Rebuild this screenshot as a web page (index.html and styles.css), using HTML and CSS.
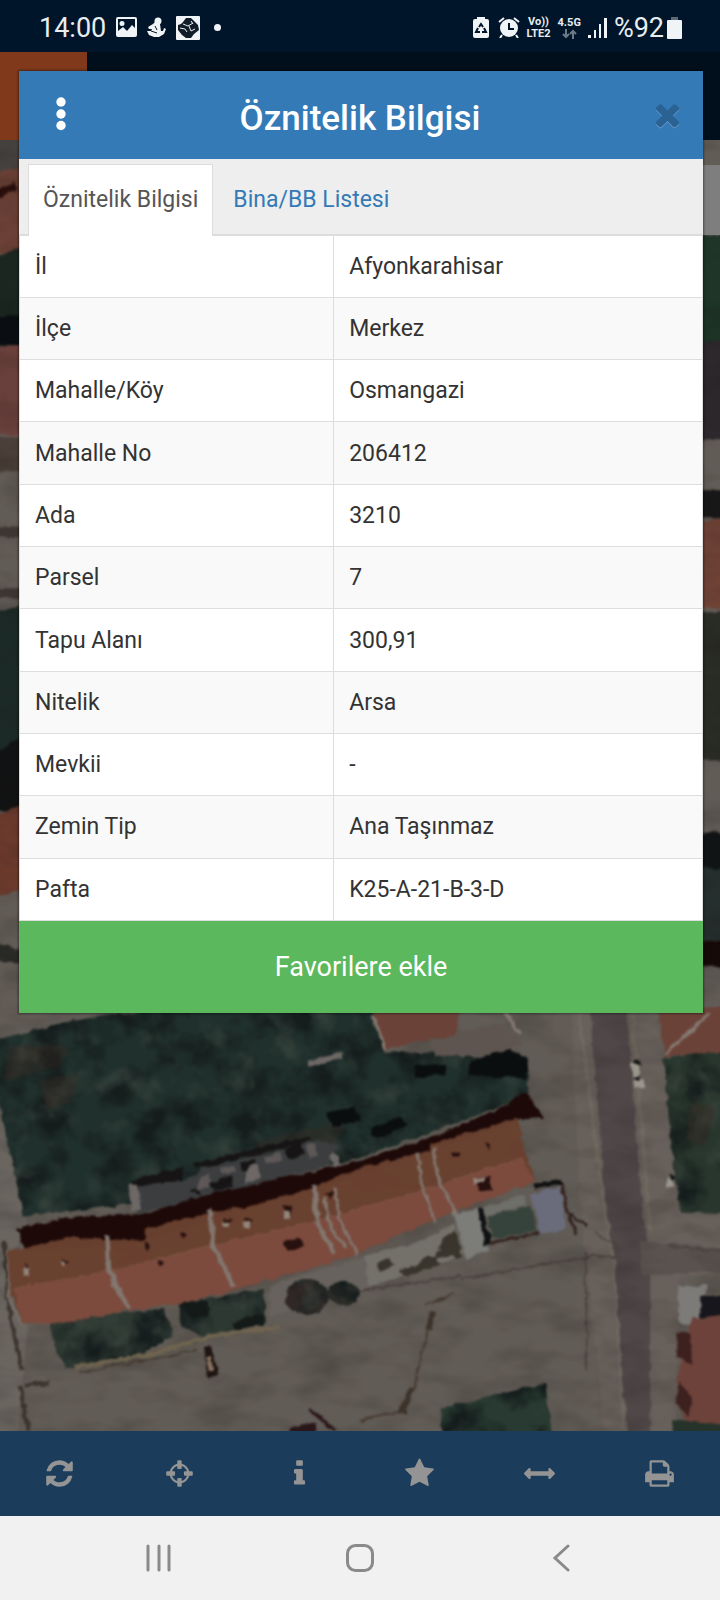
FILE: index.html
```html
<!DOCTYPE html>
<html lang="tr">
<head>
    <meta charset="UTF-8">
    <meta name="viewport" content="width=device-width, initial-scale=1.0">
    <title>Öznitelik Bilgisi</title>
    <link rel="stylesheet" href="styles.css">
</head>
<body>
    <div class="screen">
        <div class="status-bar">
            <div class="status-group">
                <span class="clock">14:00</span>
                <svg class="status-icon" width="21" height="21" viewBox="0 0 21 21">
                    <path fill-rule="evenodd" d="M2 0h17a2 2 0 0 1 2 2v16a2 2 0 0 1-2 2H2a2 2 0 0 1-2-2V2a2 2 0 0 1 2-2zM2 2v12l5-4 4 4 5-6 3 3V2zM6 4a2 2 0 1 1 0 5 2 2 0 0 1 0-5z"/>
                </svg>
                <svg class="status-icon" width="19" height="21" viewBox="0 0 19 21">
                    <circle cx="11" cy="4" r="3.500"/>
                    <path d="M8 5l5 2 1 7 2 0 1-3 2 1-2 5-5 3-5 0-5-2-2-4 4 0 1-2-3 0-1-2 5-3z"/>
                    <path d="M8 9l2 4M4 14l6 2" stroke="#001529" fill="none"/>
                </svg>
                <svg class="status-icon" width="24" height="24" viewBox="0 0 24 24">
                    <rect width="24" height="24" rx="1"/>
                    <path fill="#101c28" d="M7 6l3-4 5 0 4 4 3 3 1 5-5 4-3 4-5 0-4-3-4-5 0-5 3-1z"/>
                    <path stroke="#e8edf0" fill="none" d="M7 8l5 2 5-3M4 12l5 1 2 3M13 10l2 5 4-2M15 5l2 3"/>
                </svg>
                <span class="status-dot"></span>
            </div>
            <div class="status-group status-right">
                <svg class="status-icon" width="16" height="21" viewBox="0 0 16 21">
                    <path d="M4 0h8v2h2a2 2 0 0 1 2 2v15a2 2 0 0 1-2 2H2a2 2 0 0 1-2-2V4a2 2 0 0 1 2-2h2z"/>
                    <path stroke="#001529" stroke-width="2" fill="none" d="M6 10l2-3 2 3M5 11l-2 4h4M11 11l2 4h-4"/>
                </svg>
                <svg class="status-icon alarm" width="22" height="21" viewBox="0 0 22 21">
                    <circle cx="11" cy="11" r="9"/>
                    <path stroke="#f0f4f7" stroke-width="2" fill="none" d="M1 5l5-4M21 5l-5-4M4 18l-2 3M18 18l2 3"/>
                    <path stroke="#001529" stroke-width="2" fill="none" d="M11 6v6h5"/>
                </svg>
                <span class="net-label"><span>Vo))</span><span>LTE2</span></span>
                <span class="net-label"><span>4.5G</span>
                    <svg width="15" height="10" viewBox="0 0 15 10"><path stroke="#6c7a86" stroke-width="2" fill="none" d="M4 0v8M1 5l3 3 3-3M11 10V2M8 5l3-3 3 3"/></svg>
                </span>
                <svg class="status-icon" width="19" height="21" viewBox="0 0 19 21">
                    <path d="M0 18h3v3H0zM6 13h2v8H6zM11 7h2v14h-2zM16 1h3v20h-3z"/>
                </svg>
                <span class="battery">%92
                    <svg class="status-icon" width="15" height="22" viewBox="0 0 15 22"><path fill="#5d6972" d="M4 0h7v3H4z"/><rect y="3" width="15" height="19" rx="1"/></svg>
                </span>
            </div>
        </div>

        <div class="app-header"><div class="app-menu"></div></div>

        <div class="map">
            <svg class="map-image" viewBox="0 140 720 1290" preserveAspectRatio="xMidYMid slice">
                <defs>
                    <filter id="rough" x="0" y="0" width="100%" height="100%" color-interpolation-filters="sRGB">
                        <feTurbulence type="fractalNoise" baseFrequency="0.1" numOctaves="3" seed="4" result="n"/>
                        <feDisplacementMap in="SourceGraphic" in2="n" scale="6" xChannelSelector="R" yChannelSelector="G"/>
                        <feGaussianBlur stdDeviation="1.100"/>
                    </filter>
                    <filter id="leaves" x="0" y="0" width="100%" height="100%" color-interpolation-filters="sRGB">
                        <feTurbulence type="fractalNoise" baseFrequency="0.03" numOctaves="4" seed="11" result="n"/>
                        <feColorMatrix in="n" values="0 0 0 0 0.08  0 0 0 0 0.11  0 0 0 0 0.11  3 0 0 0 -1.300"/>
                        <feComposite in2="SourceAlpha" operator="in" result="dark"/>
                        <feColorMatrix in="n" values="0 0 0 0 0.26  0 0 0 0 0.3  0 0 0 0 0.27  0 2 0 0 -1.100"/>
                        <feComposite in2="SourceAlpha" operator="in" result="light"/>
                        <feMerge><feMergeNode in="SourceGraphic"/><feMergeNode in="dark"/><feMergeNode in="light"/></feMerge>
                    </filter>
                    <filter id="grain" x="0" y="0" width="100%" height="100%" color-interpolation-filters="sRGB">
                        <feTurbulence type="fractalNoise" baseFrequency="0.02 0.04" numOctaves="3" seed="7"/>
                        <feColorMatrix values="0 0 0 0 0.1  0 0 0 0 0.08  0 0 0 0 0.07  1.800 0 0 0 -0.750"/>
                    </filter>
                </defs>
                <rect y="140" width="720" height="1290" fill="#625c56"/>
                <g filter="url(#rough)">
                    <!-- left edge -->
                    <path fill="#45413e" d="M-9 130h40v50H-9z"/>
                    <path fill="#6b4036" d="M-9 175l40-12v90H-9z"/>
                    <path fill="#2a0d0b" d="M-9 192l25-10v8l-25 12z"/>
                    <path fill="#1b2721" d="M-9 258l40-14v104H-9z"/>
                    <path fill="#0a0e12" d="M-9 318l40-4v34l-40-6z"/>
                    <path fill="#6a403c" d="M-9 345h40v90H-9z"/>
                    <path fill="#4b4039" d="M-9 437h40v34H-9z"/>
                    <path fill="#3f3733" d="M-9 527h40v10H-9zM-9 588h40v10H-9z"/>
                    <path fill="#1c2a27" d="M-9 612l40-8v150H-9z"/>
                    <path fill="#111213" d="M-9 755l40-25v80H-9z"/>
                    <path fill="#6b3a2d" d="M-9 815l40-12v84l-40 12z"/>
                    <path fill="#292926" d="M-9 940l40 12v14l-40-8z"/>
                    <!-- right edge -->
                    <path fill="#1d3627" d="M690 234h40v114h-40z"/>
                    <path fill="#2c282c" d="M690 345l40-8v102h-40z"/>
                    <path fill="#161817" d="M690 490h40v28h-40z"/>
                    <path fill="#6f4236" d="M690 524l40-8v92h-40z"/>
                    <path fill="#2a2c26" d="M690 612h40v148h-40z"/>
                    <path fill="#111415" d="M690 832h40v38h-40z"/>
                    <path fill="#252f2e" d="M690 868h40v72h-40z"/>
                    <path fill="#150908" d="M690 940h40v26h-40z"/>
                    <!-- roads -->
                    <path fill="#68605a" d="M570 1000h95l20 215h45v60h-50l-5 160h-70l-25-230z"/>
                    <path fill="#504749" d="M590 1000h36l14 185 8 58 20 16-18 14 0 160h-22l-18-190-8-80z"/>
                    <path fill="#5a524f" d="M640 1240l90 8v22l-88 4z"/>
                    <path fill="none" stroke="#716861" stroke-width="3" d="M578 1010l26 190 10 70 10 160M632 1010l18 220"/>
                    <path fill="none" stroke="#4c4440" stroke-width="2" d="M460 1278l130-22 30 0M585 1250l2 120M596 1232l24 16M670 1246l50 4M360 1290l100-15"/>
                    <path fill="#6a655f" d="M-9 1110l14 0 22 115-14 30 15 70-10 110H-9z"/>
                    <path fill="none" stroke="#3c352f" stroke-width="4" d="M4 1240l6 70 12 60M21 1385l8 45M26 1384l24-3"/>
                    <path fill="none" stroke="#786e68" stroke-width="3" d="M8 1250l2 50 12 24"/>
                </g>
                <rect y="140" width="720" height="1290" filter="url(#grain)" opacity=".25"/>
                <g filter="url(#rough)">
                    <g filter="url(#leaves)">
                        <path fill="#20302c" d="M-9 1040l94-22 60-8 230 0 10 42 90-2 52 5 2 38-60 25-120 42-160 36-165 20-24-112z"/>
                        <path fill="#28362d" d="M663 1058l67-10v164h-50l-8-60z"/>
                        <path fill="#283a31" d="M440 1408l105-26 8 60H445z"/>
                        <path fill="#2d3832" d="M50 1322l70-10 45-4 8 26-40 24-66 10-12-22zM180 1302l84-14 2 34-62 14-24-12z"/>
                    </g>
                    <path fill="#3b2923" d="M10 1045h60l-10 20-55 15zM40 1080l40-8-8 30-25 5zM260 1140l90-22-20 34-90 14zM690 1100l24 6-8 40-20-6z" opacity=".35"/>
                    <path fill="#0b0e0f" d="M415 1065l32-2-2 10-30 4zM470 1060l40-12 18 8-2 22-58-4zM325 1112l30-6 6 14-28 6zM370 1128l30-12 8 8-32 14z"/>
                    <!-- back yards -->
                    <path fill="#3c3d3f" d="M127 1185l60-6 20-14 50-10 60-16 22 6-10 20-80 20-110 28z"/>
                    <path fill="#161414" d="M130 1180l54-14-2 14-46 6zM195 1163l115-28v5l-113 28zM210 1182l22-8 2 12-20 4zM240 1162l16-4-2 10-12 2zM284 1148l16-6 4 12-14 4zM190 1190l8-4 2 8z"/>
                    <path fill="#6d6866" d="M250 1164l8 0 2 14-16 4zM129 1183h9l3 26-10 2zM308 1060l34-8v6l-34 8zM335 1150l8 20-5 6-8-20z"/>
                    <path fill="#5d5857" d="M200 1178l10-4 0 12-14 4zM220 1168l14-4 2 6-14 4zM264 1156l16-4 2 8-16 4zM306 1144l10-2 2 14-10 2z"/>
                    <!-- terrace row -->
                    <path fill="#1d0908" d="M17 1228L67 1217 145 1213 205 1194 360 1160 440 1133 500 1107 525 1092 545 1117 518 1119 430 1150 310 1190 245 1207 145 1240 25 1250z"/>
                    <path fill="#69402f" fill-opacity=".98" d="M8 1250L70 1237 145 1240 145 1228 205 1213 245 1206 310 1188 360 1167 430 1150 430 1144 518 1117 522 1140 535 1181 450 1212 375 1245 330 1262 230 1290 180 1303 130 1309 50 1324 22 1322 10 1288z"/>
                    <path fill="#7c4b3e" d="M14 1288L110 1270 210 1245 315 1221 415 1192 522 1157 535 1181 450 1212 375 1245 330 1262 230 1290 180 1303 130 1309 50 1324 22 1322z"/>
                    <path fill="none" stroke="#835748" stroke-width="1" d="M14 1288L110 1270 210 1245 315 1221 415 1192 522 1157"/>
                    <path fill="none" stroke="#82776f" stroke-width="5" d="M107 1234l2 36 20 38M209 1208l5 38 20 40M315 1183l2 38 18 32"/>
                    <path fill="none" stroke="#82776f" stroke-width="3" d="M324 1196l6 30 16 22M335 1187l4 30 18 36M418 1152l3 28 14 42M434 1146l3 28 20 42"/>
                    <path fill="#27100e" d="M25 1262l5 6-4 4zM63 1257l6 4-4 4zM146 1242l6 4-5 4zM181 1231l6 4-4 4zM224 1216l8 4-6 4zM245 1216l8 3-6 5zM283 1205l9 3-2 7zM281 1241l18-4 6 9-17 4zM158 1259l6 2-4 4zM452 1152h8v4h-8zM484 1140l6 3-1 7zM477 1177l12-2 4 14-14 2zM325 1193l8-2-2 8z"/>
                    <path fill="#93867c" d="M23 1267h6v7h-6zM62 1260h4v5h-4zM223 1221h6v6h-6zM244 1220h6v7h-6zM284 1210h6v8h-6zM474 1178l10-2v4l-9 4z"/>
                    <!-- front gardens -->
                    <path fill="#67625d" d="M270 1284l50-15 50-14v32l-50 14-50 14z"/>
                    <path fill="#74716b" d="M365 1255l50-13 40-18 8 28-48 18-46 16z"/>
                    <path fill="#39352c" d="M398 1270l20-6 8-10 10 2 8-20 12-6 6 26-58 20zM376 1262l12-5 6 8-14 6z"/>
                    <path fill="#74716b" d="M416 1250l20-8 4 8-18 8zM436 1258l18-4 0 5-16 4z"/>
                    <path fill="#7c7c79" d="M455 1214l23-6 10 42-22 8z"/>
                    <path fill="#6d6f68" d="M482 1207l42-13 2 10-40 12z"/>
                    <path fill="#35433c" d="M488 1216l42-12 6 26-44 8z"/>
                    <path fill="#101112" d="M478 1208l5 0 8 34-7 2zM533 1184l28-5 2 4-28 6z"/>
                    <path fill="#6a6c7b" d="M530 1194l30-9 6 44-26 4z"/>
                    <path fill="none" stroke="#33231f" stroke-width="3" d="M562 1184l5 28 20 14M490 1242l48-10M568 1215l8 18"/>
                    <g filter="url(#leaves)">
                        <ellipse cx="307" cy="1296" rx="22" ry="18" fill="#302826"/>
                        <ellipse cx="344" cy="1292" rx="16" ry="12" fill="#35342d"/>
                    </g>
                    <path fill="#141a17" d="M182 1302l26-2 2 16-22 2zM232 1322l32-10v12l-28 6z"/>
                    <path fill="none" stroke="#6f644f" stroke-width="4" d="M75 1366l80-14 60-18 66-8"/>
                    <path fill="none" stroke="#443a30" stroke-width="2" d="M80 1372l70-14 46-8M424 1304l30-10M432 1312l-10 40-8 36-12 22-42 10"/>
                    <path fill="#3c342b" d="M430 1310l6 2-4 18-6-4zM410 1385l4 2-8 26-8-2z"/>
                    <path fill="#1f1512" d="M203 1346l8-1 8 30-10 3z"/>
                    <path fill="#84705d" d="M206 1356l5 0 3 14-5 0z"/>
                    <path fill="#291619" d="M290 1428l24-7 4 20h-30zM310 1407l28 22-5 1-24-20z"/>
                    <!-- houses at the edges -->
                    <path fill="#6b4238" d="M372 1006h90l-8 28-70 14zM657 1006h80v44l-72 6z"/>
                    <path fill="none" stroke="#857a72" stroke-width="3" d="M372 1014l14 34M665 1053l44-40M505 1012l16 22"/>
                    <path fill="#5e5550" d="M430 1040l66-18 30 20-44 14-48 0z"/>
                    <path fill="#7c7b78" d="M678 1286l28-2v26l-18 14-10-4z"/>
                    <path fill="#17161c" d="M700 1296l36-4v32l-36-6z"/>
                    <path fill="#6d423a" d="M692 1318l44-6v120h-50l-10-50z"/>
                    <path fill="#3d211f" d="M676 1332l14 0 2 32-14-8zM678 1380l14 16-4 20-12-14z"/>
                    <path fill="#26332a" d="M672 1418l60 8v18h-60z"/>
                    <path fill="#9a968d" d="M632 1062h7v14h-7zM634 1078l8 0 2 8-10 2zM666 1178l8 0v8h-8z"/>
                    <path fill="#101111" d="M633 1060h8v3h-8zM634 1076h6v3h-6zM668 1174l8 2-3 5z"/>
                </g>
                <rect x="690" y="165" width="30" height="70" fill="#7e7e7e"/>
            </svg>
        </div>

        <div class="toolbar">
            <button class="tool" aria-label="Yenile"><svg viewBox="0 0 1792 1792"><path d="M1639 1056q0 5-1 7-64 268-268 434.500t-478 166.500q-146 0-282.500-55t-243.500-157l-129 129q-19 19-45 19t-45-19-19-45v-448q0-26 19-45t45-19h448q26 0 45 19t19 45-19 45l-137 137q71 66 161 102t187 36q134 0 250-65t186-179q11-17 53-117 8-23 30-23h192q13 0 22.500 9.500t9.500 22.500zm25-800v448q0 26-19 45t-45 19h-448q-26 0-45-19t-19-45 19-45l138-138q-148-137-349-137-134 0-250 65t-186 179q-11 17-53 117-8 23-30 23h-199q-13 0-22.500-9.500t-9.500-22.500v-7q65-268 270-434.500t480-166.500q146 0 284 55.500t245 156.500l130-129q19-19 45-19t45 19 19 45z"/></svg></button>
            <button class="tool" aria-label="Konum"><svg viewBox="0 0 1792 1792"><path d="M1325 1024h-109q-26 0-45-19t-19-45v-128q0-26 19-45t45-19h109q-32-108-112.500-188.500t-188.500-112.500v109q0 26-19 45t-45 19h-128q-26 0-45-19t-19-45v-109q-108 32-188.500 112.500t-112.500 188.500h109q26 0 45 19t19 45v128q0 26-19 45t-45 19h-109q32 108 112.500 188.500t188.500 112.500v-109q0-26 19-45t45-19h128q26 0 45 19t19 45v109q108-32 188.500-112.500t112.500-188.500zm339-192v128q0 26-19 45t-45 19h-143q-37 161-154.500 278.500t-278.500 154.500v143q0 26-19 45t-45 19h-128q-26 0-45-19t-19-45v-143q-161-37-278.500-154.500t-154.500-278.500h-143q-26 0-45-19t-19-45v-128q0-26 19-45t45-19h143q37-161 154.500-278.500t278.500-154.500v-143q0-26 19-45t45-19h128q26 0 45 19t19 45v143q161 37 278.500 154.500t154.500 278.500h143q26 0 45 19t19 45z"/></svg></button>
            <button class="tool" aria-label="Bilgi"><svg viewBox="0 0 1792 1792"><path d="M1216 1344v128q0 26-19 45t-45 19h-512q-26 0-45-19t-19-45v-128q0-26 19-45t45-19h64v-384h-64q-26 0-45-19t-19-45v-128q0-26 19-45t45-19h384q26 0 45 19t19 45v576h64q26 0 45 19t19 45zm-128-1152v192q0 26-19 45t-45 19h-256q-26 0-45-19t-19-45v-192q0-26 19-45t45-19h256q26 0 45 19t19 45z"/></svg></button>
            <button class="tool" aria-label="Favoriler"><svg viewBox="0 0 1792 1792"><path d="M1728 647q0 22-26 48l-363 354 86 500q1 7 1 20 0 21-10.500 35.500t-30.500 14.500q-19 0-40-12l-449-236-449 236q-22 12-40 12-21 0-31.500-14.500t-10.500-35.500q0-6 2-20l86-500-364-354q-25-27-25-48 0-37 56-46l502-73 225-455q19-41 49-41t49 41l225 455 502 73q56 9 56 46z"/></svg></button>
            <button class="tool" aria-label="Ölçüm"><svg viewBox="0 0 1792 1792"><path d="M1792 896q0 26-19 45l-256 256q-19 19-45 19t-45-19-19-45v-128h-1024v128q0 26-19 45t-45 19-45-19l-256-256q-19-19-19-45t19-45l256-256q19-19 45-19t45 19 19 45v128h1024v-128q0-26 19-45t45-19 45 19l256 256q19 19 19 45z"/></svg></button>
            <button class="tool" aria-label="Yazdır"><svg viewBox="0 0 1792 1792"><path d="M448 1536h896v-256h-896v256zm0-640h896v-384h-160q-40 0-68-28t-28-68v-160h-640v640zm1152 64q0-26-19-45t-45-19-45 19-19 45 19 45 45 19 45-19 19-45zm128 0v416q0 13-9.500 22.500t-22.500 9.500h-224v160q0 40-28 68t-68 28h-960q-40 0-68-28t-28-68v-160h-224q-13 0-22.500-9.500t-9.500-22.500v-416q0-79 56.500-135.500t135.500-56.500h64v-544q0-40 28-68t68-28h672q40 0 88 20t76 48l152 152q28 28 48 76t20 88v256h64q79 0 135.500 56.500t56.500 135.500z"/></svg></button>
        </div>

        <div class="nav-bar">
            <button class="nav-button" aria-label="Son uygulamalar"><svg width="28" height="28" viewBox="0 0 28 28"><path d="M4 2v24M15 2v24M25 2v24"/></svg></button>
            <button class="nav-button" aria-label="Ana ekran"><svg width="28" height="28" viewBox="0 0 28 28"><rect x="1.500" y="1.500" width="25" height="25" rx="8"/></svg></button>
            <button class="nav-button" aria-label="Geri"><svg width="28" height="28" viewBox="0 0 28 28"><path d="M20 2L7 14l13 12"/></svg></button>
        </div>

        <div class="modal" role="dialog" aria-labelledby="modalTitle">
            <div class="modal-header">
                <button class="modal-menu" aria-label="Menü"><svg width="10" height="34" viewBox="0 0 10 34"><circle cx="5" cy="5" r="4.700"/><circle cx="5" cy="17" r="4.700"/><circle cx="5" cy="28.500" r="4.700"/></svg></button>
                <h4 class="modal-title" id="modalTitle">Öznitelik Bilgisi</h4>
                <button class="modal-close" aria-label="Kapat"><svg viewBox="0 0 1792 1792"><path d="M1490 1322q0 40-28 68l-136 136q-28 28-68 28t-68-28l-294-294-294 294q-28 28-68 28t-68-28l-136-136q-28-28-28-68t28-68l294-294-294-294q-28-28-28-68t28-68l136-136q28-28 68-28t68 28l294 294 294-294q28-28 68-28t68 28l136 136q28 28 28 68t-28 68l-294 294 294 294q28 28 28 68z"/></svg></button>
            </div>
            <div class="tabs" role="tablist">
                <button class="tab active" role="tab" aria-selected="true">Öznitelik Bilgisi</button>
                <button class="tab" role="tab" aria-selected="false">Bina/BB Listesi</button>
            </div>
            <table class="info-table">
                <tr><th scope="row">İl</th><td>Afyonkarahisar</td></tr>
                <tr><th scope="row">İlçe</th><td>Merkez</td></tr>
                <tr><th scope="row">Mahalle/Köy</th><td>Osmangazi</td></tr>
                <tr><th scope="row">Mahalle No</th><td>206412</td></tr>
                <tr><th scope="row">Ada</th><td>3210</td></tr>
                <tr><th scope="row">Parsel</th><td>7</td></tr>
                <tr><th scope="row">Tapu Alanı</th><td>300,91</td></tr>
                <tr><th scope="row">Nitelik</th><td>Arsa</td></tr>
                <tr><th scope="row">Mevkii</th><td>-</td></tr>
                <tr><th scope="row">Zemin Tip</th><td>Ana Taşınmaz</td></tr>
                <tr><th scope="row">Pafta</th><td>K25-A-21-B-3-D</td></tr>
            </table>
            <button class="favorite-button">Favorilere ekle</button>
        </div>
    </div>
</body>
</html>
```

FILE: styles.css
```css
* {
    box-sizing: border-box;
}

body {
    margin: 0;
    font-family: Roboto, "Noto Sans", sans-serif;
    font-size: 23px;
    color: #333;
}

button {
    margin: 0;
    padding: 0;
    border: none;
    background: none;
    font: inherit;
    cursor: pointer;
}

svg {
    display: block;
}

.screen {
    position: relative;
    display: flex;
    flex-direction: column;
    min-height: 100vh;
}

/* status bar */
.status-bar {
    display: flex;
    justify-content: space-between;
    align-items: center;
    height: 52px;
    padding: 3px 38px 0 39px;
    background: #001529;
    color: #e8edf0;
    font-size: 27px;
}

.status-group {
    display: flex;
    align-items: center;
    gap: 10px;
}

.status-right {
    gap: 7px;
}

.status-icon {
    fill: #f0f4f7;
}

.alarm {
    margin-left: 2px;
}

.status-dot {
    width: 7px;
    height: 7px;
    margin-left: 4px;
    border-radius: 50%;
    background: #f0f4f7;
}

.net-label {
    display: flex;
    flex-direction: column;
    align-items: center;
    font-size: 11px;
    font-weight: 700;
    line-height: 12px;
}

.battery {
    display: flex;
    align-items: center;
    gap: 3px;
}

/* page behind the dialog */
.app-header {
    height: 88px;
    background: #000f1b;
}

.app-menu {
    width: 87px;
    height: 100%;
    background: #80391b;
}

.map {
    position: relative;
    flex: 1;
    overflow: hidden;
    background: #625c56;
}

.map-image {
    position: absolute;
    width: 100%;
    height: 100%;
}

.toolbar {
    display: flex;
    height: 85px;
    background: #1b3d5b;
}

.tool {
    display: flex;
    flex: 1;
    align-items: center;
    justify-content: center;
}

.tool svg {
    width: 31px;
    height: 31px;
    margin-right: 2px;
    fill: #949494;
}

.nav-bar {
    display: flex;
    justify-content: center;
    height: 84px;
    background: #f1f1f1;
}

.nav-button {
    width: 28%;
    display: flex;
    align-items: center;
    justify-content: center;
}

.nav-button svg {
    fill: none;
    stroke: #8a8a8a;
    stroke-width: 3;
    stroke-linecap: round;
}

/* dialog */
.modal {
    position: absolute;
    top: 71px;
    left: 19px;
    right: 17px;
    background: #fff;
    box-shadow: 0 0 2px 1px rgba(0, 0, 0, 0.4);
}

.modal-header {
    display: flex;
    align-items: center;
    height: 88px;
    padding: 0 18px 2px 37px;
    background: #337ab7;
}

.modal-menu svg {
    fill: #fff;
}

.modal-title {
    flex: 1;
    margin: 0;
    padding: 10px 0 0 4px;
    color: #fff;
    font-size: 35px;
    font-weight: 500;
    line-height: 40px;
    text-align: center;
}

.modal-close svg {
    width: 35px;
    height: 35px;
    fill: #2a6294;
    filter: drop-shadow(0 1px 0 #6a9cc8);
}

.tabs {
    display: flex;
    height: 77px;
    padding: 5px 9px 0;
    background: #eee;
    border-bottom: 2px solid #ddd;
}

.tab {
    padding: 0 14px;
    border: 1px solid transparent;
    color: #337ab7;
}

.tab.active {
    margin-right: 5px;
    margin-bottom: -2px;
    padding-bottom: 2px;
    border-color: #ddd;
    border-bottom: none;
    background: #fff;
    color: #555;
}

.info-table {
    width: 100%;
    height: 685px;
    border-collapse: collapse;
    table-layout: fixed;
}

.info-table th,
.info-table td {
    padding: 0 15px;
    border: 1px solid #ddd;
    font-weight: 400;
    text-align: left;
}

.info-table th {
    width: 46%;
}

.info-table tr:first-child > * {
    border-top: none;
}

.info-table tr:nth-child(even) {
    background: #f9f9f9;
}

.favorite-button {
    display: block;
    width: 100%;
    height: 92px;
    background: #5cb85c;
    color: #fff;
    font-size: 27px;
}
```
